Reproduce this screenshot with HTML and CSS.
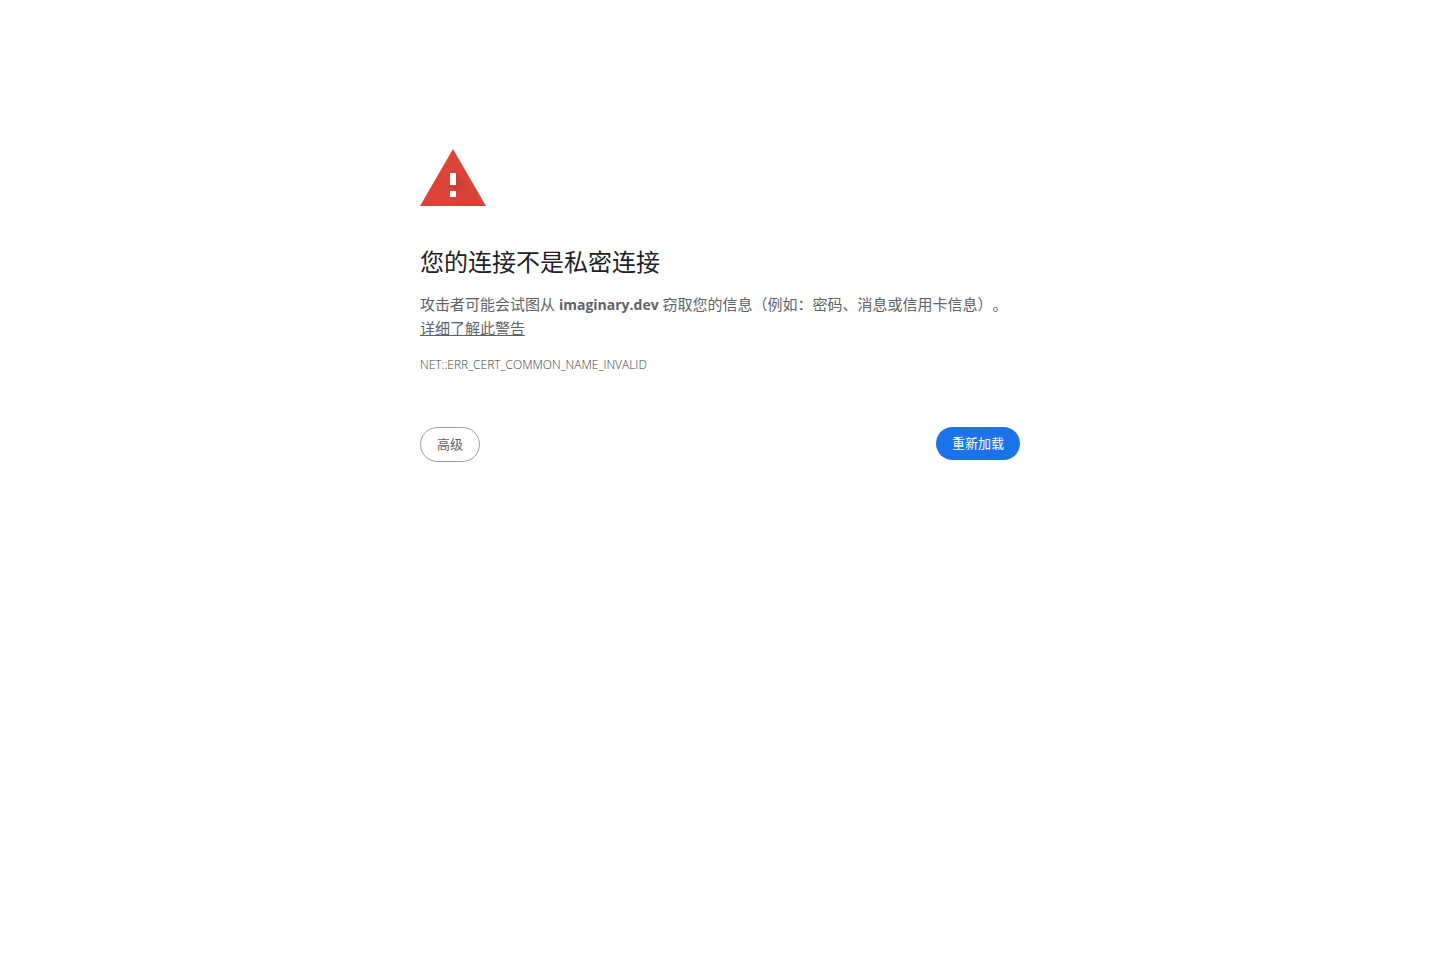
FILE: index.html
```html
<!DOCTYPE html>
<html lang="zh-CN">
<head>
<meta charset="utf-8">
<meta name="viewport" content="width=device-width, initial-scale=1">
<title>隐私设置错误</title>
<link rel="stylesheet" href="styles.css">
</head>
<body>
<main class="interstitial">
  <svg class="warning-icon" viewBox="0 0 66 57" aria-hidden="true">
    <defs>
      <linearGradient id="shade" gradientUnits="userSpaceOnUse" x1="33" y1="28" x2="47" y2="42">
        <stop offset="0" stop-color="#262626" stop-opacity=".16"/>
        <stop offset="1" stop-color="#262626" stop-opacity=".02"/>
      </linearGradient>
    </defs>
    <path fill="#db4437" d="M33 0 66 57H0z"/>
    <path fill="url(#shade)" d="M36 24 53.500 41.500 62.500 57H39L30 48l6-6-6-6z"/>
    <path fill="#fff" d="M30 24h6v12h-6zM30 42h6v6h-6z"/>
  </svg>
  <h1 class="title">您的连接不是私密连接</h1>
  <p class="message">攻击者可能会试图从 <strong class="host">imaginary.dev</strong> 窃取您的信息（例如：密码、消息或信用卡信息）。<a class="learn-more" href="#">详细了解此警告</a></p>
  <div class="error-code">NET::ERR_CERT_COMMON_NAME_INVALID</div>
  <div class="actions">
    <button class="button button-secondary" type="button">高级</button>
    <button class="button button-primary" type="button">重新加载</button>
  </div>
</main>
</body>
</html>
```
FILE: styles.css
```css
body {
  margin: 0;
  background: #fff;
  color: #5f6368;
  font-family: "Open Sans", "Noto Sans CJK SC", sans-serif;
  font-size: 15px;
  line-height: 24px;
  text-spacing-trim: space-all;
}

.interstitial {
  box-sizing: border-box;
  max-width: 600px;
  margin: 0 auto;
  padding-top: 149px;
}

.warning-icon {
  display: block;
  width: 66px;
  height: 57px;
}

.title {
  margin: 41px 0 16px;
  color: #202124;
  font-size: 24px;
  font-weight: 400;
  line-height: 29px;
}

.message {
  margin: 0;
}

.host {
  font-size: 14px;
  font-weight: 700;
  line-height: 1;
}

.learn-more {
  display: table;
  color: inherit;
  text-decoration: underline;
}

.error-code {
  margin-top: 13px;
  color: #3c4043;
  font-size: 12px;
  font-weight: 300;
}

.actions {
  display: flex;
  flex-wrap: wrap;
  align-items: flex-start;
  justify-content: space-between;
  margin-top: 50px;
}

.button {
  border: 0;
  border-radius: 20px;
  padding: 8px 16px;
  font-family: inherit;
  font-size: 13px;
  line-height: 17px;
  cursor: pointer;
}

.button-primary {
  background: #1a73e8;
  color: #fff;
}

.button-secondary {
  border: 1px solid #9aa0a6;
  background: #fff;
  color: #5f6368;
}
```
